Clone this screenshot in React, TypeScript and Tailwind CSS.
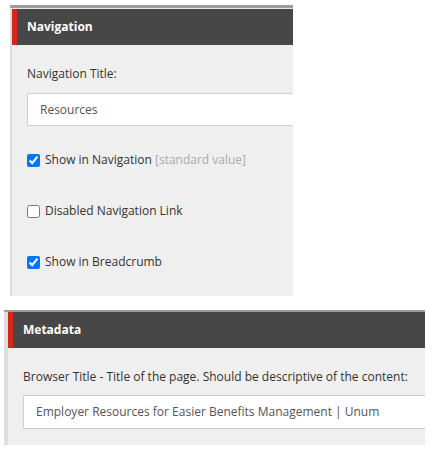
import React from "react";

const font = { fontFamily: '"Open Sans", "Liberation Sans", sans-serif' };

function Header({ title }: { title: string }) {
  return (
    <div className="flex h-[36px]">
      <div className="w-[5px] bg-[#d7261b]" />
      <div className="flex-1 bg-[#474747] flex items-center pl-[10px] text-white font-bold text-[12px]">
        {title}
      </div>
    </div>
  );
}

function Check({ label, checked, note }: { label: string; checked?: boolean; note?: string }) {
  return (
    <label className="flex items-center gap-[5px] h-[18px] text-[12px] text-[#333]">
      <input type="checkbox" defaultChecked={checked} className="w-[13px] h-[13px] m-0" />
      <span>
        {label}
        {note && <span className="text-[#aaa]"> {note}</span>}
      </span>
    </label>
  );
}

export default function App() {
  return (
    <div className="bg-white w-[435px] h-[457px] overflow-hidden" style={font}>
      <div className="ml-[10px] mt-[5px] w-[283px] overflow-hidden">
        <div className="h-[3px] bg-[#9d9d9d]" />
        <div className="h-[1px] bg-[#e8e8e8]" />
        <div className="flex">
          <div className="w-[2px] bg-[#dddddd]" />
          <div className="flex-1 overflow-hidden">
            <Header title="Navigation" />
            <div className="bg-[#efefef] pl-[15px] pt-[20px] pb-[25px]">
              <div className="text-[12px] leading-[18px] text-[#333]">Navigation Title:</div>
              <div className="mt-[10px] h-[33px] w-[400px] bg-white border border-[#cfcfcf] flex items-center pl-[12px] text-[12px] text-[#555]">
                Resources
              </div>
              <div className="flex flex-col gap-[33px] mt-[25px]">
                <Check label="Show in Navigation" note="[standard value]" checked />
                <Check label="Disabled Navigation Link" />
                <Check label="Show in Breadcrumb" checked />
              </div>
            </div>
          </div>
        </div>
      </div>

      <div className="ml-[4px] mt-[14px] w-[421px] overflow-hidden">
        <div className="h-[2px] bg-[#9d9d9d]" />
        <div className="flex">
          <div className="w-[4px] bg-[#dddddd]" />
          <div className="flex-1 overflow-hidden">
            <Header title="Metadata" />
            <div className="bg-[#efefef] pl-[15px] pt-[20px] pb-[16px]">
              <div className="text-[12px] leading-[18px] text-[#333] whitespace-nowrap">
                Browser Title - Title of the page. Should be descriptive of the content:
              </div>
              <div className="mt-[9px] h-[34px] w-[500px] bg-white border border-[#cfcfcf] flex items-center pl-[12px] text-[12px] text-[#555]">
                Employer Resources for Easier Benefits Management | Unum
              </div>
            </div>
          </div>
        </div>
      </div>
    </div>
  );
}
